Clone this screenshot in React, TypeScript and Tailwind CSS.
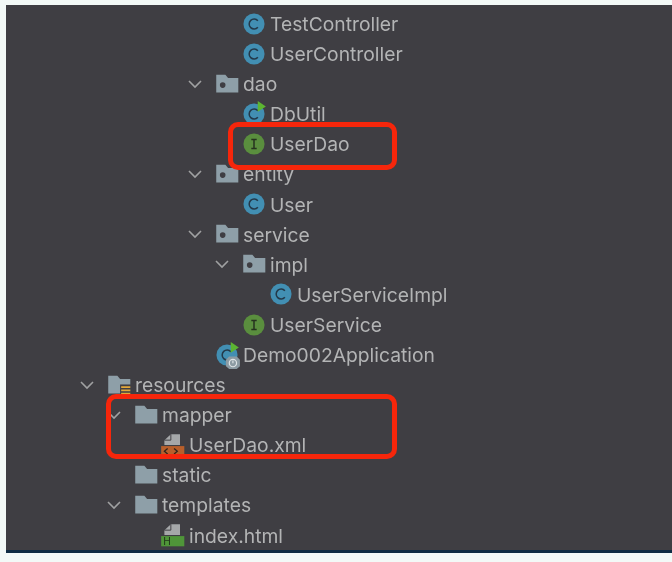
import type { ReactNode } from "react";

type Kind = "class" | "runnable" | "iface" | "package" | "folder" | "resources" | "xml" | "html" | "app";

type Row = {
  name: string;
  kind: Kind;
  indent: string;
  open?: boolean;
};

const rows: Row[] = [
  { name: "TestController", kind: "class", indent: "pl-[234px]" },
  { name: "UserController", kind: "class", indent: "pl-[234px]" },
  { name: "dao", kind: "package", indent: "pl-[207px]", open: true },
  { name: "DbUtil", kind: "runnable", indent: "pl-[234px]" },
  { name: "UserDao", kind: "iface", indent: "pl-[234px]" },
  { name: "entity", kind: "package", indent: "pl-[207px]", open: true },
  { name: "User", kind: "class", indent: "pl-[234px]" },
  { name: "service", kind: "package", indent: "pl-[207px]", open: true },
  { name: "impl", kind: "package", indent: "pl-[234px]", open: true },
  { name: "UserServiceImpl", kind: "class", indent: "pl-[261px]" },
  { name: "UserService", kind: "iface", indent: "pl-[234px]" },
  { name: "Demo002Application", kind: "app", indent: "pl-[207px]" },
  { name: "resources", kind: "resources", indent: "pl-[99px]", open: true },
  { name: "mapper", kind: "folder", indent: "pl-[126px]", open: true },
  { name: "UserDao.xml", kind: "xml", indent: "pl-[153px]" },
  { name: "static", kind: "folder", indent: "pl-[126px]" },
  { name: "templates", kind: "folder", indent: "pl-[126px]", open: true },
  { name: "index.html", kind: "html", indent: "pl-[153px]" },
];

function Chevron() {
  return (
    <svg width="14" height="9" viewBox="0 0 14 9" fill="none" className="text-[#a0a1a2]">
      <path d="M1 1l6 6 6-6" stroke="currentColor" strokeWidth="1.6" />
    </svg>
  );
}

function Svg({ children }: { children: ReactNode }) {
  return (
    <svg width="28" height="28" viewBox="0 0 26 26" className="shrink-0 overflow-visible">
      {children}
    </svg>
  );
}

const folderPath = "M3 4.5h8.5l2.5 3h9.5v13.5H3z";
const classLetter = "M16.6 10a4.6 4.6 0 1 0 0 6";

function Icon({ kind }: { kind: Kind }) {
  switch (kind) {
    case "class":
      return (
        <Svg>
          <circle cx="13" cy="13" r="9.8" fill="#428fb3" />
          <path d={classLetter} fill="none" stroke="#23394a" strokeWidth="1.4" />
        </Svg>
      );
    case "runnable":
      return (
        <Svg>
          <circle cx="13" cy="13" r="9.8" fill="#428fb3" />
          <path d={classLetter} fill="none" stroke="#23394a" strokeWidth="1.4" />
          <path d="M16.5 1l7.5 5-7.5 5z" fill="#5cb531" />
        </Svg>
      );
    case "iface":
      return (
        <Svg>
          <circle cx="13" cy="13" r="9.8" fill="#5a8e3e" />
          <path d="M10.5 8.8h5M10.5 17.2h5M13 8.8v8.4" fill="none" stroke="#26331f" strokeWidth="1.4" />
        </Svg>
      );
    case "app":
      return (
        <Svg>
          <circle cx="13" cy="13" r="9.8" fill="#428fb3" />
          <path d={classLetter} fill="none" stroke="#23394a" strokeWidth="1.4" />
          <path d="M16.5 1l7.5 5-7.5 5z" fill="#5cb531" />
          <path d="M15 14.5h7l3 3v6l-3 2.5h-7l-3-2.5v-6z" fill="#8c9ba3" />
          <circle cx="18.5" cy="20.5" r="3.4" fill="none" stroke="#dfe4e6" strokeWidth="1.1" />
          <path d="M18.5 18v2.6" stroke="#dfe4e6" strokeWidth="1.1" />
        </Svg>
      );
    case "package":
      return (
        <Svg>
          <path d={folderPath} fill="#8e9fa8" />
          <circle cx="9" cy="14" r="2.6" fill="#3f3e43" />
        </Svg>
      );
    case "folder":
      return (
        <Svg>
          <path d={folderPath} fill="#8e9fa8" />
        </Svg>
      );
    case "resources":
      return (
        <Svg>
          <path d={folderPath} fill="#8e9fa8" />
          <rect x="14" y="12.5" width="10" height="10" fill="#3f3e43" />
          <path d="M15 15h8.5M15 18h8.5M15 21h8.5" stroke="#e3a83a" strokeWidth="1.5" />
        </Svg>
      );
    case "xml":
      return (
        <Svg>
          <path d="M5 13V8.5L11 3h8.5v10z" fill="#a5a7a9" />
          <path d="M11 3v5.5H5" fill="none" stroke="#3f3e43" strokeWidth="0.9" />
          <rect x="2" y="14" width="21.5" height="9.5" fill="#b85f2b" />
          <path d="M8 16.2l-3 2.6 3 2.6M14 16.2l3 2.6-3 2.6" fill="none" stroke="#30221a" strokeWidth="1.2" />
        </Svg>
      );
    case "html":
      return (
        <Svg>
          <path d="M5 13V8.5L11 3h8.5v10z" fill="#a5a7a9" />
          <path d="M11 3v5.5H5" fill="none" stroke="#3f3e43" strokeWidth="0.9" />
          <rect x="2" y="14" width="21.5" height="9.5" fill="#4f9539" />
          <text x="4" y="22.6" fontSize="9.5" fill="#1f3319" fontFamily="Inter, sans-serif">
            H
          </text>
        </Svg>
      );
  }
}

export default function App() {
  return (
    <div className="h-[562px] w-[672px] overflow-hidden bg-[#f3f9f7] pl-[6px] pt-[5px] font-['Inter',sans-serif]">
      <div className="relative h-[548px] border-b-[3px] border-[#0f2c44] bg-[#3f3e43]">
        <div className="pt-[4.6px] blur-[0.5px]">
          {rows.map((row, i) => (
            <div key={i} className={`flex h-[30.1px] items-center ${row.indent}`}>
              <div className="relative mb-[2px] flex items-center">
                {row.open && (
                  <span className="absolute left-[-25px] top-[10px] flex">
                    <Chevron />
                  </span>
                )}
                <Icon kind={row.kind} />
              </div>
              <span className="ml-[2px] text-[19.3px] leading-none text-[#b3b4b5]">{row.name}</span>
            </div>
          ))}
        </div>
        {/* Red annotation boxes */}
        <div className="absolute left-[222px] top-[117px] h-[48px] w-[169px] rounded-[10px] border-[5px] border-[#f6260b]" />
        <div className="absolute left-[100px] top-[389px] h-[65px] w-[291px] rounded-[10px] border-[5px] border-[#f6260b]" />
      </div>
    </div>
  );
}
